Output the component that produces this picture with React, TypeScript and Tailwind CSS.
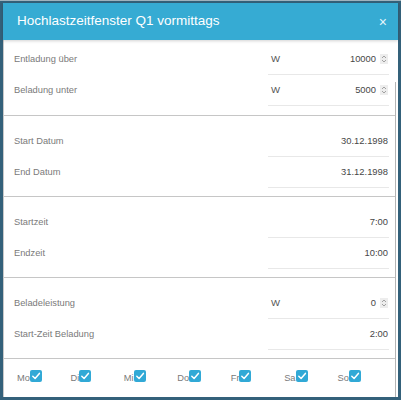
import React from "react";

type Row = { label: string; unit?: string; value: string; spin?: boolean };

const sections: Row[][] = [
  [
    { label: "Entladung über", unit: "W", value: "10000", spin: true },
    { label: "Beladung unter", unit: "W", value: "5000", spin: true },
  ],
  [
    { label: "Start Datum", value: "30.12.1998" },
    { label: "End Datum", value: "31.12.1998" },
  ],
  [
    { label: "Startzeit", value: "7:00" },
    { label: "Endzeit", value: "10:00" },
  ],
  [
    { label: "Beladeleistung", unit: "W", value: "0", spin: true },
    { label: "Start-Zeit Beladung", value: "2:00" },
  ],
];

const days = ["Mo", "Di", "Mi", "Do", "Fr", "Sa", "So"];

function Spinner() {
  return (
    <span className="ml-[4px] flex h-[10px] w-[8px] items-center justify-center bg-[#ededed]">
      <svg width="8" height="10" viewBox="0 0 8 10" fill="none">
        <path d="M2 4 L4 2 L6 4" stroke="#999" strokeWidth="0.9" />
        <path d="M2 6 L4 8 L6 6" stroke="#999" strokeWidth="0.9" />
      </svg>
    </span>
  );
}

function Check() {
  return (
    <svg width="12" height="12" viewBox="0 0 12 12" className="mb-[2px] shrink-0">
      <rect x="0" y="0" width="12" height="12" rx="2" fill="#31a9d6" />
      <path d="M2.8 6.2 L5.1 8.5 L9.4 3.4" stroke="#fff" strokeWidth="1.5" fill="none" strokeLinecap="round" strokeLinejoin="round" />
    </svg>
  );
}

function FieldRow({ row }: { row: Row }) {
  return (
    <div className="flex h-[31px] items-center">
      <div className="flex-1 text-[9.3px] text-[#7a7a7a]">{row.label}</div>
      <div className="flex h-full w-[121px] items-center border-b border-[#e8e8e8] pl-[3px] pr-[1px]">
        {row.unit && <span className="text-[9.6px] text-[#555]">{row.unit}</span>}
        <span className="flex-1 text-right text-[9.4px] text-[#474747]">{row.value}</span>
        {row.spin && <Spinner />}
      </div>
    </div>
  );
}

export default function App() {
  return (
    <div className="h-[400px] w-[401px] border-t border-[#9fb3be] bg-[#34617a] px-[3px] pt-[2px] font-['Liberation_Sans',Arial,sans-serif]">
      <div className="flex h-[394px] flex-col bg-white">
        <div className="relative z-10 flex h-[37px] shrink-0 items-center justify-between bg-[#36abd3] pl-[14px] pr-[11px] shadow-[0_1px_3px_rgba(0,0,0,0.18)]">
          <span className="text-[13.5px] text-white">Hochlastzeitfenster Q1 vormittags</span>
          <span className="text-[14px] leading-none text-[#e6f6fc]">×</span>
        </div>
        <div className="flex flex-1">
          <div className="flex flex-1 flex-col border-l border-[#c9c9c9]">
            {sections.map((rows, i) => (
              <div
                key={i}
                className={
                  i === 0
                    ? "pb-[9px] pl-[10px] pr-[6px] pt-[4px]"
                    : "border-t border-[#c6c6c6] pb-[8px] pl-[10px] pr-[6px] pt-[10px]"
                }
              >
                {rows.map((r) => (
                  <FieldRow key={r.label} row={r} />
                ))}
              </div>
            ))}
            <div className="flex-1 border-t border-[#c6c6c6] pl-[13px] pt-[11px]">
              <div className="grid w-[374px] grid-cols-7">
                {days.map((d) => (
                  <div key={d} className="flex items-end">
                    <span className="text-[9.3px] leading-[12px] text-[#7a7a7a]">{d}</span>
                    <Check />
                  </div>
                ))}
              </div>
            </div>
          </div>
          <div className="w-[3px]">
            <div className="mt-[42px] h-[calc(100%-42px)] border-l border-[#b5b5b5]" />
          </div>
        </div>
      </div>
    </div>
  );
}
